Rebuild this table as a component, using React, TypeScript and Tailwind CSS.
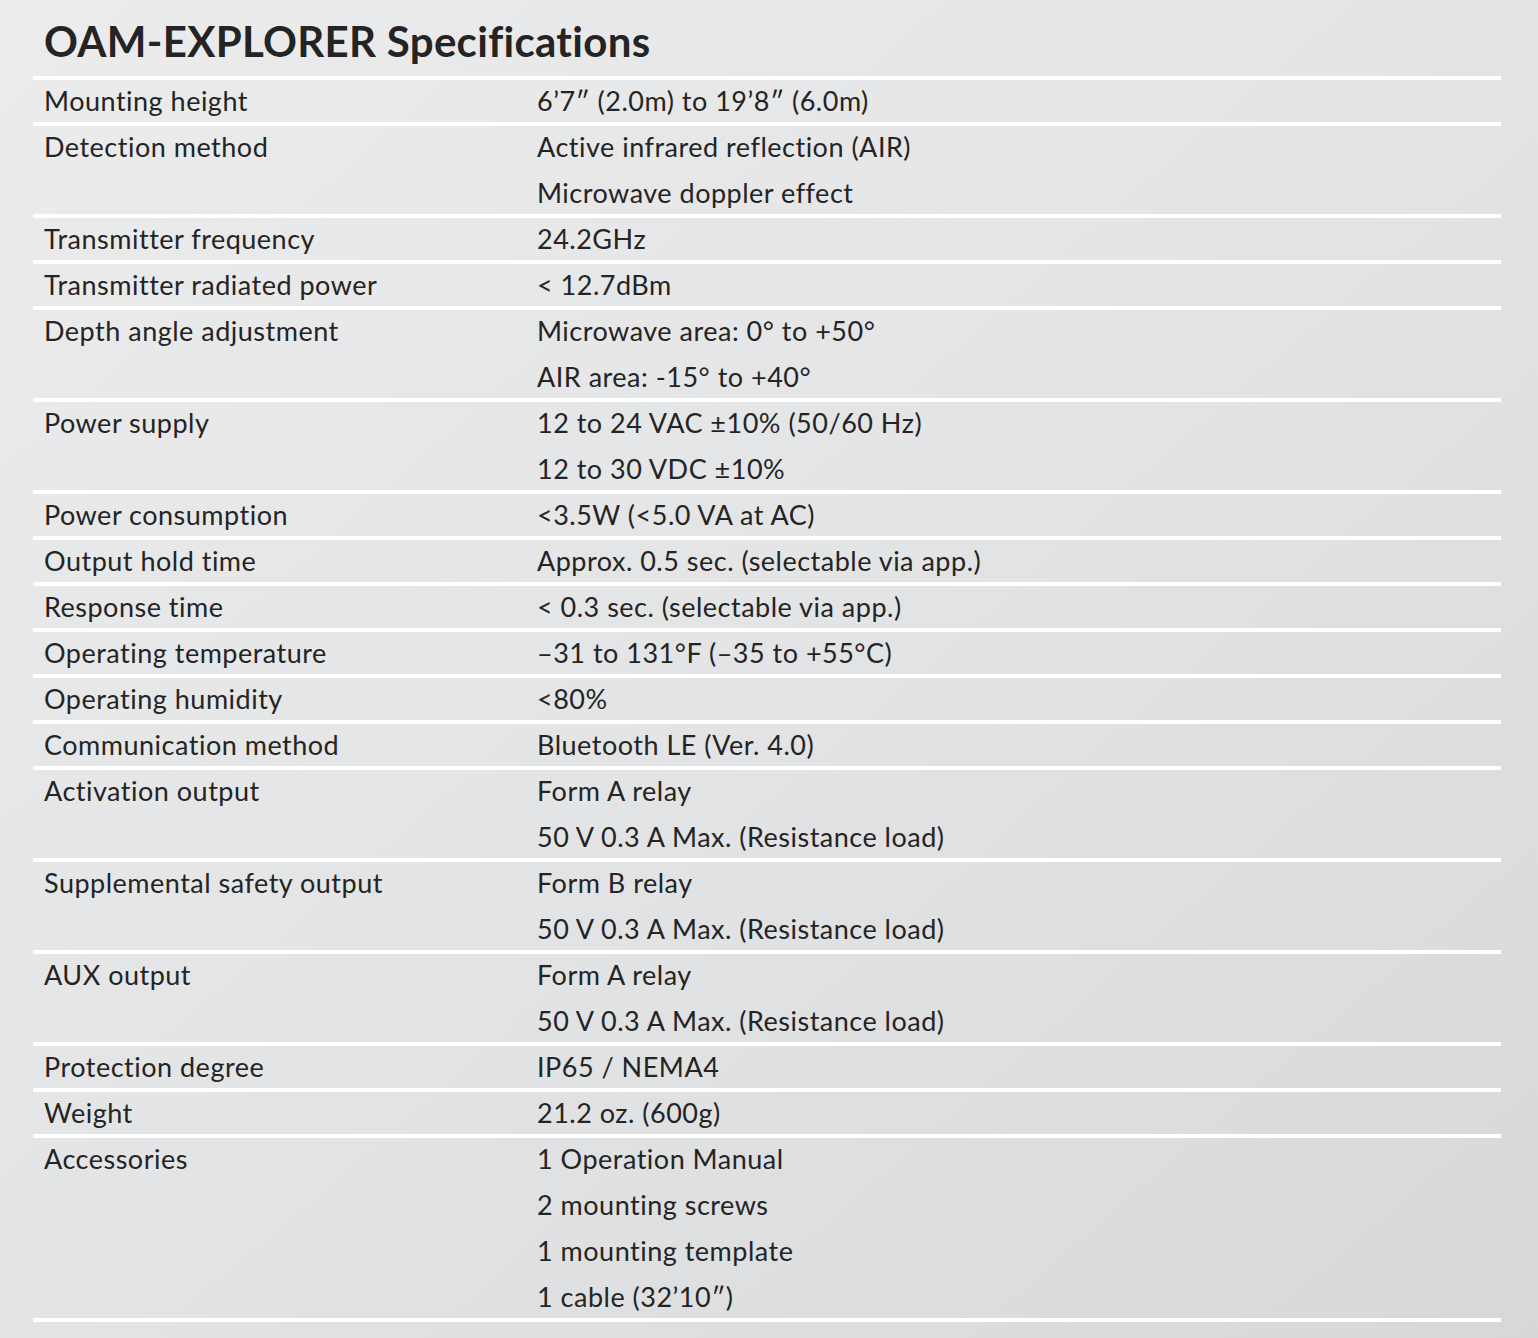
const specs: { label: string; values: string[] }[] = [
  { label: "Mounting height", values: ["6\u20197\u2033 (2.0m) to 19\u20198\u2033 (6.0m)"] },
  { label: "Detection method", values: ["Active infrared reflection (AIR)", "Microwave doppler effect"] },
  { label: "Transmitter frequency", values: ["24.2GHz"] },
  { label: "Transmitter radiated power", values: ["< 12.7dBm"] },
  { label: "Depth angle adjustment", values: ["Microwave area: 0\u00b0 to +50\u00b0", "AIR area: -15\u00b0 to +40\u00b0"] },
  { label: "Power supply", values: ["12 to 24 VAC \u00b110% (50/60 Hz)", "12 to 30 VDC \u00b110%"] },
  { label: "Power consumption", values: ["<3.5W (<5.0 VA at AC)"] },
  { label: "Output hold time", values: ["Approx. 0.5 sec. (selectable via app.)"] },
  { label: "Response time", values: ["< 0.3 sec. (selectable via app.)"] },
  { label: "Operating temperature", values: ["\u201331 to 131\u00b0F (\u201335 to +55\u00b0C)"] },
  { label: "Operating humidity", values: ["<80%"] },
  { label: "Communication method", values: ["Bluetooth LE (Ver. 4.0)"] },
  { label: "Activation output", values: ["Form A relay", "50 V 0.3 A Max. (Resistance load)"] },
  { label: "Supplemental safety output", values: ["Form B relay", "50 V 0.3 A Max. (Resistance load)"] },
  { label: "AUX output", values: ["Form A relay", "50 V 0.3 A Max. (Resistance load)"] },
  { label: "Protection degree", values: ["IP65 / NEMA4"] },
  { label: "Weight", values: ["21.2 oz. (600g)"] },
  {
    label: "Accessories",
    values: ["1 Operation Manual", "2 mounting screws", "1 mounting template", "1 cable (32\u201910\u2033)"],
  },
];

export default function App() {
  return (
    <div
      className="w-full h-[1338px] overflow-hidden bg-gradient-to-br from-[#ececed] via-[#e3e4e5] to-[#d7d8d9] text-[#242424]"
      style={{ fontFamily: "Lato, 'Open Sans', sans-serif" }}
    >
      <h1 className="pl-[44px] pt-[16px] mb-[10px] text-[42px] leading-[50px] font-bold tracking-[0.3px]">
        OAM-EXPLORER Specifications
      </h1>
      <div className="ml-[33px] w-[1468px] border-t-4 border-white">
        {specs.map((row) => (
          <div key={row.label} className="flex border-b-4 border-white">
            <div
              className="w-[504px] pl-[11px] text-[27px] leading-[46px] tracking-[0.5px] -my-[2px]"
              style={{ height: row.values.length * 46 }}
            >
              {row.label}
            </div>
            <div className="flex-1 text-[27px] leading-[46px] tracking-[0.5px] -my-[2px]">
              {row.values.map((v) => (
                <div key={v}>{v}</div>
              ))}
            </div>
          </div>
        ))}
      </div>
    </div>
  );
}
